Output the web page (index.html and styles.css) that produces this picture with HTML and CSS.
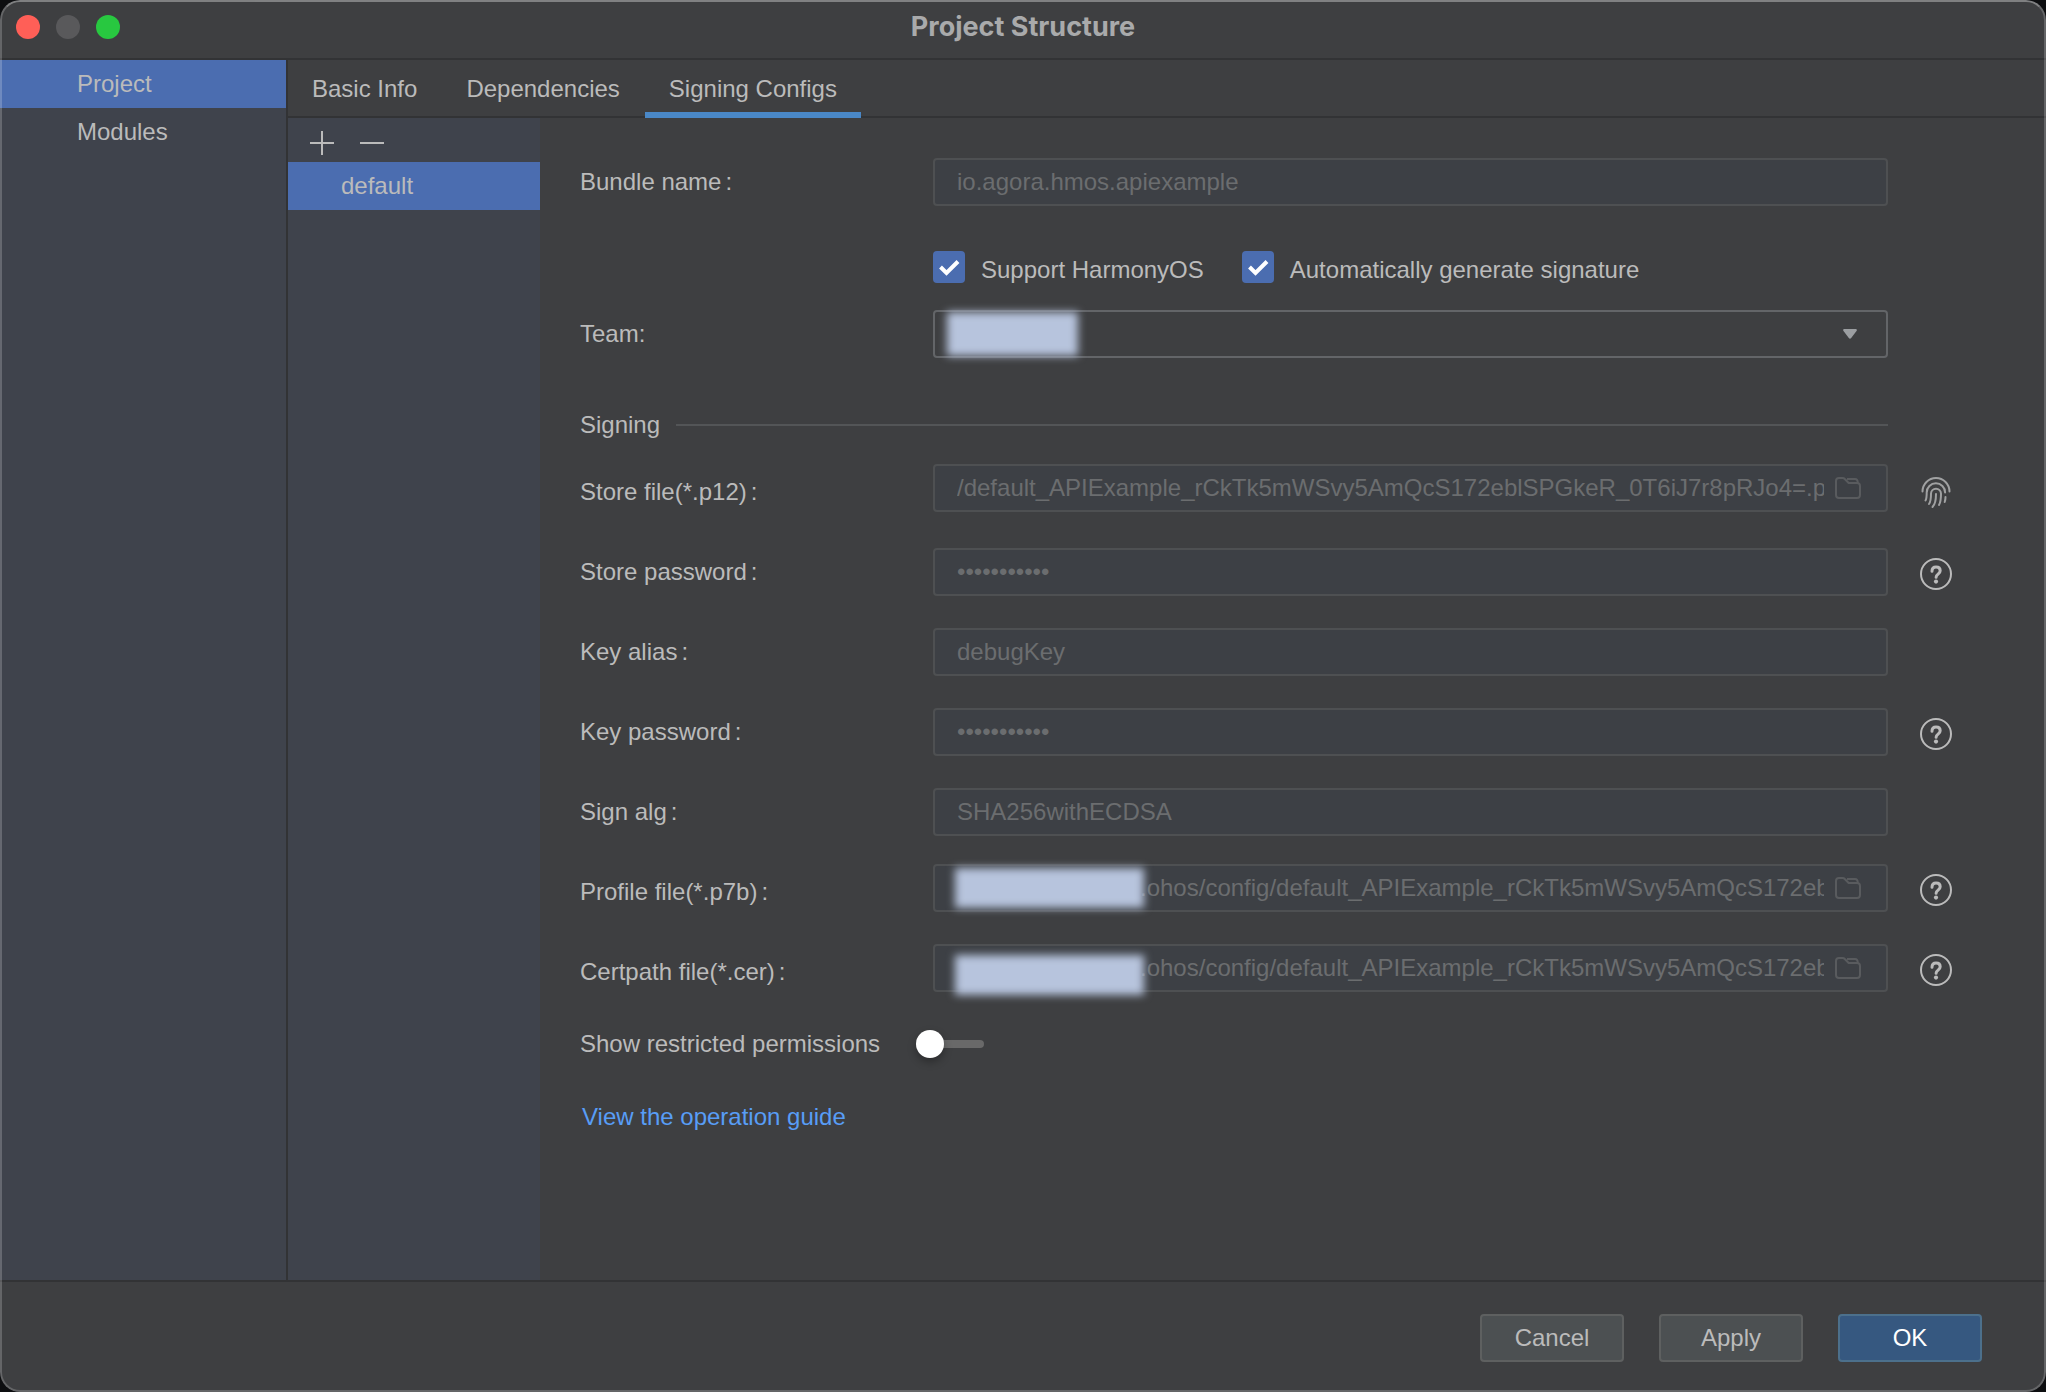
FILE: index.html
```html
<!DOCTYPE html>
<html lang="en">
<head>
<meta charset="utf-8">
<title>Project Structure</title>
<link rel="stylesheet" href="styles.css">
</head>
<body>
<svg class="symbols" aria-hidden="true">
  <symbol id="folder" viewBox="0 0 28 24">
    <path d="M5 2h3.500c1 0 1.700.3 2.300 1l3.800 4H23a3 3 0 0 1 3 3V19a3 3 0 0 1-3 3H5a3 3 0 0 1-3-3V5a3 3 0 0 1 3-3z"/>
    <path d="M13 3h8c1.800 0 2.800 1.400 2.800 4"/>
  </symbol>
  <symbol id="help" viewBox="0 0 32 32">
    <circle cx="16" cy="16" r="15"/>
    <path d="M12 13.200c0-2.600 1.700-4.200 4.100-4.200s4.100 1.500 4.100 3.800c0 3.200-4.100 3.500-4.100 6.400"/>
    <circle class="dot" cx="16" cy="23.600" r="2.100"/>
  </symbol>
  <symbol id="fingerprint" viewBox="0 0 32 34">
    <path d="M2.500 16.500a13.500 13.500 0 0 1 27 0"/>
    <path d="M5.500 25.500c1-1.500 1.200-4 1.200-8a9.200 9.200 0 0 1 18.400 0"/>
    <path d="M9 29c1.500-2 2-5 2-10.300a5 5 0 0 1 10 0c0 5-.3 8.300-2 11.300"/>
    <path d="M12.500 32c2.500-2.500 3.500-6 3.500-13"/>
    <path d="M25.500 22c0 2-.2 3.300-.8 5"/>
  </symbol>
</svg>
<div class="window">
  <header class="titlebar">
    <div class="lights">
      <button class="light close" aria-label="Close"></button>
      <button class="light minimize" aria-label="Minimize" disabled></button>
      <button class="light zoom" aria-label="Zoom"></button>
    </div>
    <h1>Project Structure</h1>
  </header>
  <div class="body">
    <nav class="sidebar">
      <button class="item selected">Project</button>
      <button class="item">Modules</button>
    </nav>
    <main class="content">
      <div class="tabs" role="tablist">
        <button class="tab" role="tab">Basic Info</button>
        <button class="tab" role="tab">Dependencies</button>
        <button class="tab active" role="tab" aria-selected="true">Signing Configs</button>
      </div>
      <div class="panel">
        <aside class="configs">
          <div class="tools">
            <button class="tool" aria-label="Add"><svg viewBox="0 0 24 24"><path d="M12 0v24M0 12h24"/></svg></button>
            <button class="tool" aria-label="Remove"><svg viewBox="0 0 24 24"><path d="M0 12h24"/></svg></button>
          </div>
          <button class="item selected">default</button>
        </aside>
        <form class="form">
          <div class="row">
            <label for="bundle">Bundle name<span class="colon">:</span></label>
            <div class="field"><input id="bundle" type="text" value="io.agora.hmos.apiexample" disabled></div>
          </div>
          <div class="row checks">
            <div class="options">
              <label class="check"><input type="checkbox" checked><span>Support HarmonyOS</span></label>
              <label class="check"><input type="checkbox" checked><span>Automatically generate signature</span></label>
            </div>
          </div>
          <div class="row">
            <label for="team">Team:</label>
            <div class="field combo">
              <select id="team"><option></option></select>
              <svg class="arrow" viewBox="0 0 14 10"><path d="M1.500 0h11c1.300 0 1.800 1 1 2L8.200 9c-.7 1-1.700 1-2.400 0L.5 2C-.3 1 .2 0 1.500 0z"/></svg>
              <span class="mask mask-team"></span>
            </div>
          </div>
          <div class="section"><h2>Signing</h2><hr></div>
          <div class="row file">
            <label for="store">Store file(*.p12)<span class="colon">:</span></label>
            <div class="field">
              <input id="store" type="text" value="/default_APIExample_rCkTk5mWSvy5AmQcS172eblSPGkeR_0T6iJ7r8pRJo4=.p12" disabled>
              <button type="button" class="browse" aria-label="Browse" disabled><svg><use href="#folder"/></svg></button>
            </div>
            <button type="button" class="hint finger" aria-label="Generate key"><svg><use href="#fingerprint"/></svg></button>
          </div>
          <div class="row">
            <label for="storepw">Store password<span class="colon">:</span></label>
            <div class="field"><input id="storepw" type="password" value="12345678901" disabled></div>
            <button type="button" class="hint" aria-label="Help"><svg><use href="#help"/></svg></button>
          </div>
          <div class="row">
            <label for="alias">Key alias<span class="colon">:</span></label>
            <div class="field"><input id="alias" type="text" value="debugKey" disabled></div>
          </div>
          <div class="row">
            <label for="keypw">Key password<span class="colon">:</span></label>
            <div class="field"><input id="keypw" type="password" value="12345678901" disabled></div>
            <button type="button" class="hint" aria-label="Help"><svg><use href="#help"/></svg></button>
          </div>
          <div class="row">
            <label for="alg">Sign alg<span class="colon">:</span></label>
            <div class="field"><input id="alg" type="text" value="SHA256withECDSA" disabled></div>
          </div>
          <div class="row file">
            <label for="profile">Profile file(*.p7b)<span class="colon">:</span></label>
            <div class="field masked">
              <input id="profile" type="text" value=".ohos/config/default_APIExample_rCkTk5mWSvy5AmQcS172eblSPGkeR.p7b" disabled>
              <button type="button" class="browse" aria-label="Browse" disabled><svg><use href="#folder"/></svg></button>
              <span class="mask mask-profile"></span>
            </div>
            <button type="button" class="hint" aria-label="Help"><svg><use href="#help"/></svg></button>
          </div>
          <div class="row file">
            <label for="cert">Certpath file(*.cer)<span class="colon">:</span></label>
            <div class="field masked">
              <input id="cert" type="text" value=".ohos/config/default_APIExample_rCkTk5mWSvy5AmQcS172eblSPGkeR.cer" disabled>
              <button type="button" class="browse" aria-label="Browse" disabled><svg><use href="#folder"/></svg></button>
              <span class="mask mask-cert"></span>
            </div>
            <button type="button" class="hint" aria-label="Help"><svg><use href="#help"/></svg></button>
          </div>
          <div class="toggle-row">
            <label for="restricted">Show restricted permissions</label>
            <input id="restricted" class="switch" type="checkbox" role="switch">
          </div>
          <div class="link-row"><a href="#guide">View the operation guide</a></div>
        </form>
      </div>
    </main>
  </div>
  <footer class="actions">
    <button class="btn">Cancel</button>
    <button class="btn">Apply</button>
    <button class="btn primary">OK</button>
  </footer>
</div>
</body>
</html>
```

FILE: styles.css
```css
:root {
  --bg: #3e3f41;
  --side: #3f434c;
  --line: #323335;
  --text: #bbbbbb;
  --muted: #6b6d6f;
  --field: #3d4045;
  --field-line: #4e5052;
  --select: #4b6db0;
}

* { box-sizing: border-box; }

body {
  margin: 0;
  background: #0d0e10;
  color: var(--text);
  font: 24px/28px "Liberation Sans", Arial, sans-serif;
}

button, input, select {
  margin: 0;
  padding: 0;
  border: 0;
  background: none;
  color: inherit;
  font: inherit;
}

.symbols { display: none; }

.window {
  position: relative;
  display: flex;
  flex-direction: column;
  min-height: 100vh;
  overflow: hidden;
  border-radius: 20px;
  background: var(--bg);
}

.window::after {
  content: "";
  position: absolute;
  inset: 0;
  border: 2px solid rgba(255, 255, 255, 0.2);
  border-top-color: rgba(255, 255, 255, 0.34);
  border-radius: 20px;
  pointer-events: none;
}

.titlebar {
  display: grid;
  grid-template-columns: 1fr auto 1fr;
  align-items: center;
  height: 60px;
  padding: 0 16px 4px;
  border-bottom: 2px solid var(--line);
}

.titlebar h1 {
  margin: 0;
  color: #a9aaab;
  font: 700 27px/32px Inter, sans-serif;
}

.lights { display: flex; gap: 16px; }

.light {
  width: 24px;
  height: 24px;
  border-radius: 50%;
}

.close { background: #ff5f57; }
.minimize { background: #59595b; }
.zoom { background: #28c840; }

.body { display: flex; flex: 1; }

.sidebar {
  display: flex;
  flex-direction: column;
  width: 288px;
  border-right: 2px solid var(--line);
  background: var(--side);
}

.item {
  height: 48px;
  padding-left: 77px;
  text-align: left;
}

.item.selected { background: var(--select); }

.content {
  display: flex;
  flex: 1;
  flex-direction: column;
  min-width: 0;
}

.tabs {
  display: flex;
  gap: 1px;
  height: 58px;
  border-bottom: 2px solid var(--line);
}

.tab {
  height: 58px;
  padding: 6px 24px 0;
  border-bottom: 6px solid transparent;
}

.tab.active { border-color: #4a88c7; }

.panel { display: flex; flex: 1; }

.configs {
  display: flex;
  flex-direction: column;
  width: 252px;
  background: var(--side);
}

.configs .item { padding-left: 53px; }

.tools {
  display: flex;
  gap: 26px;
  height: 44px;
  padding: 13px 22px 0;
}

.tool { width: 24px; height: 24px; }

.tool svg {
  display: block;
  width: 24px;
  height: 24px;
  stroke: var(--text);
  stroke-width: 2;
}

.form {
  flex: 1;
  min-width: 0;
  padding: 24px 0 0 40px;
}

.row {
  display: grid;
  grid-template-columns: 353px 1fr 158px;
  align-items: center;
  height: 80px;
}

.colon { margin-left: 4px; }

.field {
  position: relative;
  display: flex;
  height: 48px;
  min-width: 0;
  border: 2px solid var(--field-line);
  border-radius: 4px;
  background: var(--field);
}

.file .field { margin-bottom: 8px; }

.field input {
  flex: 1;
  min-width: 0;
  margin-left: 22px;
  color: var(--muted);
}

.field.masked input { margin-left: 205px; }

.browse {
  width: 62px;
  padding-left: 10px;
}

.browse svg {
  display: block;
  width: 28px;
  height: 24px;
  fill: none;
  stroke: #595b5e;
  stroke-width: 2;
}

.hint {
  width: 32px;
  margin: 4px 0 0 32px;
}

.file .hint { margin: 0 0 4px 32px; }
.file .hint.finger { margin-bottom: 0; }

.hint svg {
  display: block;
  width: 32px;
  height: 32px;
  fill: none;
  stroke: var(--text);
  stroke-width: 2;
  stroke-linecap: round;
}

.hint.finger svg { height: 34px; stroke: #a0a1a2; }
#help path { stroke-width: 3; }
#help .dot { fill: var(--text); stroke: none; }

.combo {
  align-items: center;
  border-color: #636568;
  background: none;
}

.combo select {
  flex: 1;
  height: 44px;
  appearance: none;
}

.arrow {
  position: absolute;
  right: 29px;
  width: 14px;
  height: 10px;
  fill: #9b9ea1;
  pointer-events: none;
}

/* Blurred plates that cover private values */
.mask {
  position: absolute;
  background: #b7c4dd;
  filter: blur(4px);
}

.mask-team { left: 12px; top: 0; width: 131px; height: 44px; }
.mask-profile { left: 20px; top: 2px; width: 189px; height: 40px; }
.mask-cert { left: 20px; top: 9px; width: 189px; height: 40px; }

.row.checks { height: 72px; padding-top: 18px; }

.options {
  display: flex;
  grid-column: 2;
  gap: 38px;
}

.check {
  display: flex;
  gap: 16px;
}

.check span { padding-top: 5px; }

.check input {
  width: 32px;
  height: 32px;
  border-radius: 4px;
  appearance: none;
  background: #5a5c5e;
}

.check input:checked {
  background: var(--select) url("data:image/svg+xml,%3Csvg xmlns='http://www.w3.org/2000/svg' viewBox='0 0 32 32'%3E%3Cpath d='M7.500 16l6 6L25 10.500' fill='none' stroke='white' stroke-width='4'/%3E%3C/svg%3E");
}

.section {
  display: flex;
  align-items: center;
  gap: 16px;
  height: 78px;
  padding: 24px 158px 0 0;
}

.section h2 { margin: 0; font: inherit; }

.section hr {
  flex: 1;
  height: 2px;
  margin: 0;
  border: 0;
  background: #535557;
}

.toggle-row {
  display: flex;
  align-items: center;
  gap: 36px;
  height: 64px;
}

.switch {
  display: flex;
  align-items: center;
  width: 68px;
  height: 28px;
  appearance: none;
}

.switch::before {
  content: "";
  z-index: 1;
  width: 28px;
  height: 28px;
  border-radius: 50%;
  background: #fff;
  box-shadow: 0 4px 8px rgba(0, 0, 0, 0.3);
}

.switch::after {
  content: "";
  width: 48px;
  height: 8px;
  margin-left: -8px;
  border-radius: 4px;
  background: #696969;
}

.link-row { padding: 27px 2px; }

a { color: #589df6; text-decoration: none; }

.actions {
  display: flex;
  justify-content: flex-end;
  gap: 35px;
  padding: 32px 64px 30px;
  border-top: 2px solid var(--line);
}

.btn {
  width: 144px;
  height: 48px;
  border: 2px solid #5e6060;
  border-radius: 4px;
  background: #4c5052;
}

.btn.primary {
  border-color: #4c708c;
  background: #365880;
  color: #fff;
}
```
